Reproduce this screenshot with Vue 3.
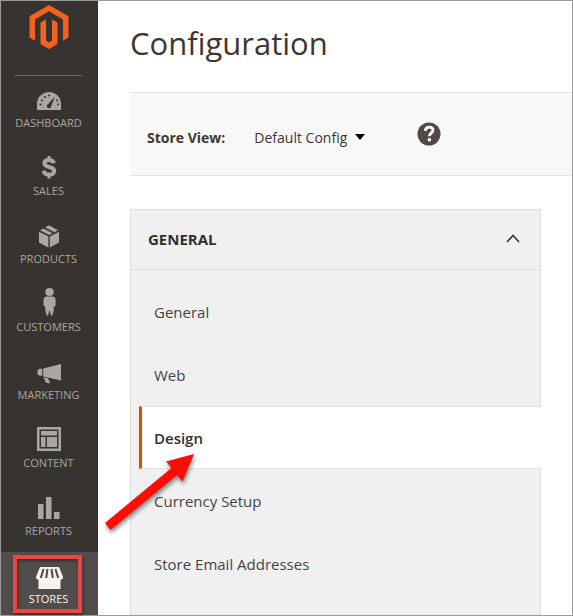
<script setup>
import { ref } from 'vue'

const open = ref(true)
const view = ref('default')
const menu = ['Dashboard', 'Sales', 'Products', 'Customers', 'Marketing', 'Content', 'Reports', 'Stores']
const sections = ['General', 'Web', 'Design', 'Currency Setup', 'Store Email Addresses']
</script>

<template>
  <div class="page">
    <aside class="sidebar">
      <a class="logo" href="#" aria-label="Magento Admin">
        <svg width="40" height="44" viewBox="0 0 40 44" fill="#f26322">
          <path d="M20 0 39.5 11.300V32.500L34 35.700V14.400L20 6.300 6 14.400V35.700L.5 32.500V11.300Z" />
          <path d="M11.500 17.600 17 14.400V35.600L20 37.500 23 35.600V14.400L28.500 17.600V39L20 44 11.500 39Z" />
        </svg>
      </a>
      <nav class="menu" aria-label="Main menu">
        <a v-for="name in menu" :key="name" class="menu-item" :class="{ active: name === 'Stores' }" href="#">
          <svg class="menu-icon" width="32" height="30" viewBox="0 0 32 30" fill="currentColor" aria-hidden="true">
            <g v-if="name === 'Dashboard'">
              <path d="M4 24V18a12 12 0 0 1 24 0V24Z" />
              <path class="cut" d="M21.800 10.500 18.200 20.200a2.200 2.200 0 1 1-3.200-2Z" />
              <g class="cut">
                <circle cx="7.500" cy="18.500" r="1" /><circle cx="8.800" cy="14.500" r="1" />
                <circle cx="11.800" cy="11" r="1" /><circle cx="16" cy="9.500" r="1" />
                <circle cx="24" cy="14.500" r="1" /><circle cx="25" cy="18.500" r="1" />
              </g>
            </g>
            <g v-else-if="name === 'Sales'" fill="none" stroke="currentColor" stroke-width="4">
              <path d="M20.900 9.200C20.400 7 18.600 5.900 16 5.900c-2.900 0-4.600 1.300-4.600 3.400 0 5 9.800 2.400 9.800 7.600 0 2.300-2 3.700-5.200 3.700-2.900 0-4.900-1.300-5.300-4" />
              <path d="M16 2V6M16 20V24.500" stroke-width="3" />
            </g>
            <g v-else-if="name === 'Products'">
              <path d="M6 9.800 15.400 14.600V25.500L6 20.500ZM26 9.800 16.800 14.600V25.500L26 20.500Z" />
              <path d="M7 8.200 10.400 6.400 19.600 11.200 16 13ZM12.200 5.400 16 3.200 25 8.200 21.400 10.200Z" />
            </g>
            <g v-else-if="name === 'Customers'">
              <ellipse cx="16.500" cy="2" rx="4.200" ry="3.900" />
              <path d="M13 6.600H20Q22.600 7 22.600 9.500V15.500L20.700 17V20.500L19.300 25.500H18L16.500 20 15 25.500H13.700L12.300 20.500V17L10.500 15.500V9.500Q10.500 7 13 6.600Z" />
            </g>
            <g v-else-if="name === 'Marketing'">
              <path d="M28 6V22.500L10.200 18.600V10.400ZM9.200 10.800V17.800H6.500L4.500 16.300V12.300L6.500 10.800ZM10.600 19.300 15 20.200 17.300 25.600 12.800 24.600Z" />
            </g>
            <g v-else-if="name === 'Content'">
              <path fill-rule="evenodd" d="M4 1H28V25H4ZM6.500 3.500V22.500H25.500V3.500ZM8 5H24V9.500H8ZM8 11H12.500V21H8ZM14 11H24V21H14Z" />
            </g>
            <g v-else-if="name === 'Reports'">
              <path d="M5 10H10.500V25H5ZM13 3H18.500V25H13ZM21 18H26.500V25H21Z" />
            </g>
            <g v-else>
              <path d="M7 5H26L30 15Q30 17.800 27.500 17.800H5.500Q3 17.800 3 15ZM5.500 16H27.500V27H5.500Z" />
              <path class="slit" d="M10.500 7 7.800 16M14.500 7 13.200 16M18.500 7 19.800 16M22.500 7 25.200 16" />
            </g>
          </svg>
          <span>{{ name }}</span>
          <i v-if="name === 'Stores'" class="highlight"></i>
        </a>
      </nav>
    </aside>

    <main class="content">
      <h1>Configuration</h1>
      <div class="scope">
        <label for="store-view">Store View:</label>
        <div class="picker">
          <select id="store-view" v-model="view">
            <option value="default">Default Config</option>
          </select>
          <svg width="10" height="6" viewBox="0 0 10 6" aria-hidden="true"><path d="M0 0H10L5 6Z" /></svg>
        </div>
        <button class="help" type="button" aria-label="Help">
          <svg width="24" height="24" viewBox="0 0 24 24">
            <circle cx="12" cy="12" r="11.500" fill="#514943" />
            <path d="M8.300 8.900C8.500 6.300 9.900 5.100 12.200 5.100c2.300 0 3.800 1.200 3.800 3.100 0 2.700-3.600 2.700-3.600 6.100" fill="none" stroke="#fff" stroke-width="2.800" />
            <rect x="10.800" y="16.300" width="3.200" height="3" fill="#fff" />
          </svg>
        </button>
      </div>

      <section class="panel">
        <button class="panel-head" type="button" :aria-expanded="open" @click="open = !open">
          <span>General</span>
          <svg width="14" height="9" viewBox="0 0 14 9" fill="none" stroke="#333" stroke-width="1.600"><path d="M1 8 7 1.500 13 8" /></svg>
        </button>
        <ul v-show="open">
          <li v-for="name in sections" :key="name">
            <a href="#" :class="{ current: name === 'Design' }">{{ name }}</a>
          </li>
        </ul>
      </section>
    </main>

    <svg class="pointer" width="100" height="86" viewBox="0 0 100 86" aria-hidden="true">
      <path d="M94 4 82.500 31.500 77 25 10.500 80 5 73 71.500 18 66 11.500Z" fill="#fb0d06" />
    </svg>
  </div>
</template>

<style>
body { margin: 0; }
</style>

<style scoped>
* { box-sizing: border-box; }
.page {
  position: relative;
  display: flex;
  min-height: 100vh;
  border: 1px solid #9b9b9b;
  background: #fff;
  color: #41362f;
  font-family: "Open Sans", sans-serif;
}
a { color: inherit; text-decoration: none; }
button { border: 0; padding: 0; background: none; color: inherit; font: inherit; cursor: pointer; }
.sidebar { display: flex; flex: 0 0 97px; flex-direction: column; background: #373330; }
.logo {
  display: flex;
  justify-content: center;
  height: 75px;
  margin: 0 16px 0 14px;
  padding-top: 4px;
  border-bottom: 1px solid #736963;
}
.menu { display: flex; flex: 1; flex-direction: column; }
.menu-item {
  position: relative;
  display: flex;
  flex-direction: column;
  align-items: center;
  height: 68px;
  padding: 10px 2px 0 0;
  color: #aaa6a0;
  font-size: 11px;
  line-height: 13px;
  text-transform: uppercase;
}
.menu-icon { display: block; overflow: visible; }
.cut { fill: #373330; }
.slit { fill: none; stroke: #4e4a48; stroke-width: 2; }
.active { flex: 1; background: #524d4b; color: #f7f3eb; }
.highlight {
  position: absolute;
  inset: 3px 16px 2px 12px;
  border: 4px solid #ef4444;
  box-shadow: 1px 2px 3px #0006, inset 1px 2px 3px #0006;
}
.content { display: flex; flex: 1; flex-direction: column; min-width: 0; padding-left: 32px; }
h1 { margin: 0; padding: 19px 0 26px; font-size: 31px; font-weight: 400; line-height: 46px; }
.scope {
  display: flex;
  align-items: center;
  height: 84px;
  padding: 6px 17px 0;
  border: solid #e3e3e3;
  border-width: 1px 0;
  background: #f8f8f8;
  font-size: 14px;
}
label { font-weight: 700; }
.picker { display: grid; align-items: center; margin-left: 29px; }
.picker > * { grid-area: 1 / 1; }
.picker svg { justify-self: end; pointer-events: none; }
select {
  appearance: none;
  border: 0;
  padding: 0 18px 0 0;
  background: transparent;
  color: #41362f;
  font: inherit;
}
.help { margin: -6px 0 0 52px; }
.help svg { display: block; }
.panel {
  flex: 1;
  margin: 33px 31px 0 0;
  border: solid #dedede;
  border-width: 1px 1px 0;
  background: #f0f0f0;
  font-size: 15px;
}
.panel-head {
  display: flex;
  align-items: center;
  justify-content: space-between;
  width: 100%;
  height: 60px;
  padding: 0 20px 2px 17px;
  border-bottom: 1px solid #dedede;
  color: #303030;
  font-weight: 700;
  text-transform: uppercase;
}
ul { margin: 0; padding: 10px 0 0 8px; list-style: none; }
li a {
  display: flex;
  align-items: center;
  height: 63px;
  padding-left: 12px;
  border-left: 3px solid transparent;
  color: #444;
}
li .current {
  margin-right: -1px;
  border: solid #e3e3e3;
  border-width: 1px 0 1px 3px;
  border-left-color: #e04f00;
  background: #fff;
  color: #303030;
  font-weight: 600;
}
.pointer { position: absolute; left: 99px; top: 449px; filter: drop-shadow(1px 3px 2px #0007); }
</style>
